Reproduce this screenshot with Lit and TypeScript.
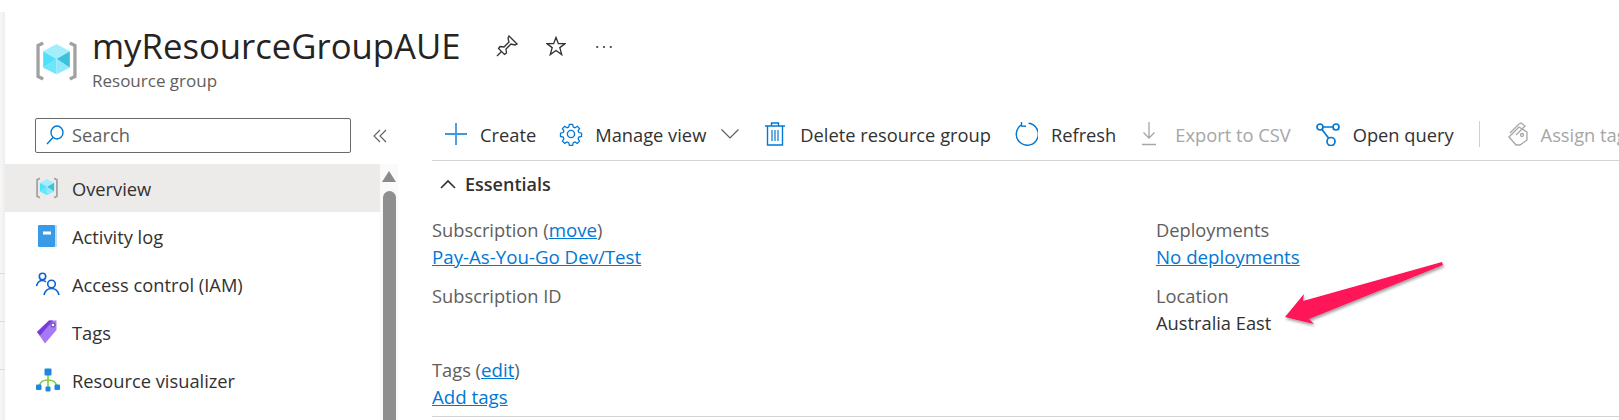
import { LitElement, html, css } from "lit";
import { customElement } from "lit/decorators.js";

const cube = (w: number, h: number) => html`<svg width=${w} height=${h} viewBox="0 0 40 40">
  <path d="M7 2.5 L2 5 V35 L7 37.5" fill="none" stroke="#a0a1a2" stroke-width="3.2"/>
  <path d="M33 2.5 L38 5 V35 L33 37.5" fill="none" stroke="#a0a1a2" stroke-width="3.2"/>
  <path d="M20 3.5 L33 10.5 L20 18 L7 10.5Z" fill="#a3eefb"/>
  <path d="M7 10.5 L20 18 L7 26.5Z" fill="#50e0fb"/>
  <path d="M7 26.5 L20 18 V33 Z" fill="#6be6fb"/>
  <path d="M33 10.5 L20 18 L33 26.5Z" fill="#3cc0dc"/>
  <path d="M33 26.5 L20 18 V33 Z" fill="#8fe8fb"/>
</svg>`;

const icons: Record<string, unknown> = {
  plus: html`<svg width="22" height="22" viewBox="0 0 22 22"><path d="M11 0V22M0 11H22" stroke="#3b97e2" stroke-width="1.8"/></svg>`,
  gear: html`<svg width="24" height="24" viewBox="0 0 24 24" fill="none" stroke="#0078d4" stroke-width="1.4"><circle cx="12" cy="12" r="3.6"/><path d="M10.2 1.2h3.6l.7 3 1.9.8 2.6-1.6 2.5 2.5-1.6 2.6.8 1.9 3 .7v3.6l-3 .7-.8 1.9 1.6 2.6-2.5 2.5-2.6-1.6-1.9.8-.7 3h-3.6l-.7-3-1.9-.8-2.6 1.6-2.5-2.5 1.6-2.6-.8-1.9-3-.7v-3.6l3-.7.8-1.9-1.6-2.6 2.5-2.5 2.6 1.6 1.9-.8z" transform="translate(1.2 1.2) scale(.9)"/></svg>`,
  trash: html`<svg width="20" height="24" viewBox="0 0 20 24" fill="none" stroke="#0078d4" stroke-width="1.4"><path d="M0 4H20M6.5 4V1H13.5V4M2.5 4V23H17.5V4"/><path d="M7 8V19M10 8V19M13 8V19" stroke-width="1.2"/></svg>`,
  refresh: html`<svg width="24" height="24" viewBox="0 0 24 24" fill="none" stroke="#0078d4" stroke-width="1.5"><path d="M7 3.2 A11 11 0 1 0 14.5 1.3"/><path d="M7.5 -0.5 L7.5 4 L12 4.2" stroke-width="1.4"/></svg>`,
  export: html`<svg width="16" height="24" viewBox="0 0 16 24" fill="none" stroke="#a6a6a6" stroke-width="1.3"><path d="M8 0V16M2.5 10.5L8 16L13.5 10.5M1 22.5H15"/></svg>`,
  query: html`<svg width="24" height="24" viewBox="0 0 24 24" fill="none" stroke="#0078d4" stroke-width="1.7"><circle cx="4" cy="5" r="3"/><circle cx="20" cy="5" r="3"/><circle cx="15" cy="19.5" r="4"/><path d="M7 5H17M6 7.5L12.5 16"/></svg>`,
  assign: html`<svg width="20" height="24" viewBox="0 0 20 24" fill="none" stroke="#a6a6a6" stroke-width="1.3"><path d="M2 11L11 2L13 1L17 4L8 13"/><path d="M1 15L11 5L19 10V18L12 23L8 23Z"/><circle cx="14" cy="13" r="1.5"/></svg>`,
};

const menu = [
  { label: "Overview", sel: true, icon: cube(22, 24) },
  { label: "Activity log", icon: html`<svg width="22" height="22" viewBox="0 0 22 22"><path d="M19 0H21V22H19Z" fill="#bfdcf5"/><rect x="2" y="0" width="17" height="22" rx="1" fill="#3a9ae6"/><rect x="7" y="6.5" width="8" height="3" fill="#fff"/></svg>` },
  { label: "Access control (IAM)", icon: html`<svg width="24" height="24" viewBox="0 0 24 24" fill="none" stroke="#0f62d6" stroke-width="1.6"><circle cx="6.5" cy="4.5" r="3.2"/><path d="M0.5 14C1.5 10 4 8.5 6.5 8.5C8 8.5 9 9 10 10"/><circle cx="15.5" cy="12" r="3.8"/><path d="M8 23C9 19 12 16.5 15.5 16.5C19 16.5 22 19 23 23"/></svg>` },
  { label: "Tags", icon: html`<svg width="22" height="24" viewBox="0 0 22 24"><path d="M1 12L13 0.5H20.5V10L9 23.5Z" fill="#a67af4"/><path d="M1 12L13 0.5H17L4 15.5Z" fill="#773adc"/><circle cx="17" cy="5" r="2" fill="#fff" stroke="#552f99"/></svg>` },
  { label: "Resource visualizer", icon: html`<svg width="24" height="24" viewBox="0 0 24 24"><path d="M12 6V21M3.5 18C4 13 8 12 12 12C16 12 20 13 20.5 18" fill="none" stroke="#7fd13b" stroke-width="1.6"/><rect x="8.5" y="0.5" width="7" height="7" rx="1" fill="#1f87e0"/><rect x="0" y="16.5" width="5.5" height="5.5" rx="1" fill="#1f87e0"/><rect x="18.5" y="16.5" width="5.5" height="5.5" rx="1" fill="#1f87e0"/><rect x="9.5" y="18.5" width="5" height="5" rx="1" fill="#1f87e0"/></svg>` },
  { label: "", icon: html`<svg width="22" height="24" viewBox="0 0 22 24"><path d="M10 6H17L15 12H9Z" fill="#f7941d"/></svg>` },
];

@customElement("app-root")
export class AppRoot extends LitElement {
  static styles = css`
    :host { display: block; width: 1619px; height: 420px; overflow: hidden; position: relative; background: #fff;
      font-family: "Open Sans", "Noto Sans", sans-serif; font-size: 18.3px; color: #323130; }
    .page { display: flex; height: 420px; padding-top: 12px; box-sizing: border-box; }
    .strip { width: 5px; flex: none; background: linear-gradient(90deg, #f7f7f7, #eeeeee); display: flex; flex-direction: column; padding-top: 261px; gap: 47px; }
    .strip i { display: block; height: 1px; background: #dddddd; }
    .main { flex: 1; min-width: 0; }
    .head { display: flex; align-items: flex-start; height: 98px; padding: 11px 0 0 31px; box-sizing: border-box; }
    .logo { width: 41px; height: 42px; margin-top: 17px; flex: none; }
    .titles { margin-left: 15px; }
    h1 { margin: 0; font-size: 34.7px; font-weight: 400; line-height: 46px; color: #252423; }
    .sub { color: #605e5c; font-size: 17px; line-height: 22px; margin-top: 1px; }
    .acts { display: flex; align-items: center; margin-left: 35px; height: 46px; }
    .star { margin-left: 28px; }
    .more { margin-left: 30px; margin-top: 1px; }
    .body { display: flex; height: 298px; }
    .side { width: 427px; flex: none; }
    .searchrow { display: flex; align-items: center; height: 35px; margin: 8px 0 11px 30px; }
    .search { width: 316px; height: 35px; box-sizing: border-box; border: 1px solid #6b6a69; border-radius: 2px; display: flex; align-items: center; padding: 0 0 2px 10px; gap: 8px; color: #605e5c; }
    .collapse { margin-left: 22px; }
    .listwrap { display: flex; }
    .list { width: 375px; flex: none; }
    .item { display: flex; align-items: center; height: 48px; padding-left: 31px; }
    .item.sel { background: #edebe9; }
    .ic { width: 36px; flex: none; display: flex; align-items: center; }
    .scroll { width: 18px; flex: none; background: #fafafa; display: flex; flex-direction: column; align-items: center; padding-top: 7px; }
    .arrowup { width: 0; height: 0; border-left: 7px solid transparent; border-right: 7px solid transparent; border-bottom: 11px solid #8a8a8a; }
    .thumb { width: 13px; height: 240px; margin-top: 9px; border-radius: 7px 7px 0 0; background: #8f8f8f; }
    .content { flex: 1; min-width: 0; }
    .bar { display: flex; align-items: center; height: 51px; border-bottom: 1px solid #d6d5d4; white-space: nowrap; overflow: hidden; box-sizing: border-box; padding: 0 0 2px 13px; }
    .ti { display: flex; align-items: center; gap: 13px; margin-right: 25px; flex: none; }
    .ti.off { color: #a6a6a6; }
    .ti svg { flex: none; }
    .ti.create { margin-right: 23px; }
    .ti.manage { gap: 12px; margin-right: 26px; }
    .ti.manage .chev { margin-left: 3px; }
    .ti.del { gap: 15px; margin-right: 23px; }
    .ti.exp { gap: 18px; }
    .sep { width: 1px; height: 26px; background: #d2d0ce; margin: 0 28px 0 0; flex: none; }
    .ess { display: flex; align-items: center; height: 46px; padding-left: 8px; gap: 9px; font-weight: 600; color: #323130; font-size: 18px; }
    .grid { display: grid; grid-template-columns: 724px 1fr; height: 209px; border-bottom: 1px solid #d6d5d4; padding-top: 8px; box-sizing: border-box; margin-top: 1px; }
    .col { display: flex; flex-direction: column; }
    .kv { display: flex; flex-direction: column; height: 66px; line-height: 27px; }
    .kv.wide { height: 74px; }
    .l { color: #605e5c; }
    a { color: #0078d4; text-decoration: underline; font-size: 18.7px; }
    .v { color: #323130; }
    .arrow { position: absolute; left: 1270px; top: 250px; pointer-events: none; overflow: visible; }
  `;

  render() {
    return html`
      <div class="page">
        <div class="strip"><i></i><i></i><i></i></div>
        <div class="main">
          <div class="head">
            <div class="logo">${cube(41, 42)}</div>
            <div class="titles">
              <h1>myResourceGroupAUE</h1>
              <div class="sub">Resource group</div>
            </div>
            <div class="acts">
              <svg width="22" height="22" viewBox="0 0 22 22" fill="none" stroke="#323130" stroke-width="1.3"><path d="M13 1L21 9L19 10L15 9L10 14L10.5 18L8.5 19.5L2.5 13.5L4 11.5L8 12L13 7L12 3ZM5.5 16.5L1 21"/></svg>
              <svg class="star" width="20" height="20" viewBox="0 0 21 21" fill="none" stroke="#323130" stroke-width="1.4"><path d="M10.5 1.5L13 8H20L14.5 12.2L16.5 19.5L10.5 15.2L4.5 19.5L6.5 12.2L1 8H8Z"/></svg>
              <svg class="more" width="16" height="4" viewBox="0 0 16 4" fill="#3b3a39"><circle cx="1.2" cy="2" r="1.1"/><circle cx="8" cy="2" r="1.1"/><circle cx="14.8" cy="2" r="1.1"/></svg>
            </div>
          </div>
          <div class="body">
            <div class="side">
              <div class="searchrow">
                <div class="search">
                  <svg width="18" height="20" viewBox="0 0 18 20" fill="none" stroke="#0078d4" stroke-width="1.4"><ellipse cx="11" cy="7.5" rx="6" ry="6.5"/><path d="M7 12.5L1 19"/></svg>
                  <span>Search</span>
                </div>
                <svg class="collapse" width="14" height="14" viewBox="0 0 14 14" fill="none" stroke="#605e5c" stroke-width="1.1"><path d="M7 1L1 7L7 13M13 1L7 7L13 13"/></svg>
              </div>
              <div class="listwrap">
                <div class="list">
                  ${menu.map(m => html`<div class="item ${m.sel ? "sel" : ""}"><span class="ic">${m.icon}</span><span>${m.label}</span></div>`)}
                </div>
                <div class="scroll"><div class="arrowup"></div><div class="thumb"></div></div>
              </div>
            </div>
            <div class="content">
              <div class="bar">
                <div class="ti create">${icons.plus}<span>Create</span></div>
                <div class="ti manage">${icons.gear}<span>Manage view</span><svg class="chev" width="18" height="10" viewBox="0 0 18 10" fill="none" stroke="#605e5c" stroke-width="1.2"><path d="M0.5 0.5L9 9L17.5 0.5"/></svg></div>
                <div class="ti del">${icons.trash}<span>Delete resource group</span></div>
                <div class="ti">${icons.refresh}<span>Refresh</span></div>
                <div class="ti off exp">${icons.export}<span>Export to CSV</span></div>
                <div class="ti">${icons.query}<span>Open query</span></div>
                <div class="sep"></div>
                <div class="ti off">${icons.assign}<span>Assign tags</span></div>
              </div>
              <div class="ess"><svg width="16" height="10" viewBox="0 0 16 10" fill="none" stroke="#323130" stroke-width="1.6"><path d="M1 9L8 2L15 9"/></svg><span>Essentials</span></div>
              <div class="grid">
                <div class="col">
                  <div class="kv"><span class="l">Subscription (<a>move</a>)</span><a>Pay-As-You-Go Dev/Test</a></div>
                  <div class="kv wide"><span class="l">Subscription ID</span></div>
                  <div class="kv"><span class="l">Tags (<a>edit</a>)</span><a>Add tags</a></div>
                </div>
                <div class="col">
                  <div class="kv"><span class="l">Deployments</span><a>No deployments</a></div>
                  <div class="kv"><span class="l">Location</span><span class="v">Australia East</span></div>
                </div>
              </div>
            </div>
          </div>
        </div>
      </div>
      <svg class="arrow" width="190" height="90" viewBox="1270 250 190 90">
        <defs><filter id="s" x="-20%" y="-20%" width="140%" height="160%"><feDropShadow dx="1" dy="2" stdDeviation="1.5" flood-color="#000" flood-opacity=".4"/></filter></defs>
        <path d="M1285 317 L1304 294 L1303 301 L1442 262 L1443 265 L1309 319 L1314 324 Z" fill="#ff1259" filter="url(#s)"/>
      </svg>
    `;
  }
}
